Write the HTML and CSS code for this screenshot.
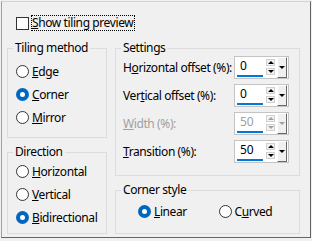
FILE: index.html
```html
<!DOCTYPE html>
<html lang="en">
<head>
  <meta charset="UTF-8">
  <title>Tiling</title>
  <link rel="stylesheet" href="styles.css">
</head>
<body>
<div class="panel">
  <div class="check-row">
    <span class="checkbox"></span>
    <span class="focus"><u>S</u>how tiling preview</span>
  </div>
  <div class="columns">
    <div class="col-left">
      <fieldset class="group tiling">
        <legend>Tiling method</legend>
        <div class="radio"><span class="dot"></span><span><u>E</u>dge</span></div>
        <div class="radio"><span class="dot on"></span><span><u>C</u>orner</span></div>
        <div class="radio"><span class="dot"></span><span><u>M</u>irror</span></div>
      </fieldset>
      <fieldset class="group direction">
        <legend>Direction</legend>
        <div class="radio"><span class="dot"></span><span><u>H</u>orizontal</span></div>
        <div class="radio"><span class="dot"></span><span><u>V</u>ertical</span></div>
        <div class="radio"><span class="dot on"></span><span><u>B</u>idirectional</span></div>
      </fieldset>
    </div>
    <div class="col-right">
      <fieldset class="group settings">
        <legend>Settings</legend>
        <div class="row">
          <span>H<u>o</u>rizontal offset (%):</span>
          <div class="spin"><span class="edit">0</span><span class="arrows"><i class="up"></i><i class="down"></i></span><span class="drop"><i class="down"></i></span></div>
        </div>
        <div class="row">
          <span>Ver<u>t</u>ical offset (%):</span>
          <div class="spin"><span class="edit">0</span><span class="arrows"><i class="up"></i><i class="down"></i></span><span class="drop"><i class="down"></i></span></div>
        </div>
        <div class="row disabled">
          <span><u>W</u>idth (%):</span>
          <div class="spin"><span class="edit">50</span><span class="arrows"><i class="up"></i><i class="down"></i></span><span class="drop"><i class="down"></i></span></div>
        </div>
        <div class="row">
          <span><u>T</u>ransition (%):</span>
          <div class="spin"><span class="edit">50</span><span class="arrows"><i class="up"></i><i class="down"></i></span><span class="drop"><i class="down"></i></span></div>
        </div>
      </fieldset>
      <fieldset class="group corner">
        <legend>Corner style</legend>
        <div class="choices">
          <div class="radio"><span class="dot on"></span><span><u>L</u>inear</span></div>
          <div class="radio"><span class="dot"></span><span>C<u>u</u>rved</span></div>
        </div>
      </fieldset>
    </div>
  </div>
</div>
</body>
</html>
```

FILE: styles.css
```css
body {
    margin: 0;
    background: #f0f0f0;
    font-family: "Noto Sans", "Open Sans", sans-serif;
    font-size: 12px;
    letter-spacing: -0.4px;
    color: #000;
    white-space: nowrap;
}

u {
    text-underline-offset: 1px;
}

.panel {
    box-sizing: border-box;
    width: 310px;
    height: 237px;
    margin: 1px;
    padding: 0 10px 0 5px;
    border-top: 1px solid #d4d4d4;
    border-left: 1px solid #a0a0a0;
    border-right: 1px solid #646464;
    border-bottom: 1px solid #646464;
}

.check-row {
    display: flex;
    align-items: center;
    height: 16px;
    margin: 13px 0 10px 9px;
}

.checkbox {
    box-sizing: border-box;
    width: 13px;
    height: 13px;
    border: 1px solid #333;
    background: #fff;
    margin-right: 2px;
}

.focus {
    height: 16px;
    line-height: 14px;
    border: 1px dotted #000;
    box-sizing: border-box;
    padding: 0 1px 0 0;
}

.columns {
    display: flex;
    gap: 8px;
}

.col-left {
    width: 100px;
}

.col-right {
    width: 185px;
}

.group {
    margin: 0;
    border: 1px solid #dcdcdc;
    padding: 0;
    min-width: 0;
}

.group legend {
    line-height: 14px;
    padding: 0 2px;
    margin-left: 5px;
}

.tiling {
    padding: 5px 0 8px 0;
}

.direction {
    margin-top: 7px;
    padding: 1px 0 4px 0;
}

.radio {
    display: flex;
    align-items: center;
    height: 23px;
    gap: 3px;
}

.tiling .radio,
.direction .radio {
    margin-left: 8px;
}

.dot {
    box-sizing: border-box;
    width: 13px;
    height: 13px;
    border-radius: 50%;
    border: 1px solid #333;
    background: #fff;
    flex: none;
}

.dot.on {
    border: 4px solid #0067c0;
    background: #fff;
}

.settings {
    padding: 0 10px 12px 0;
}

.row {
    display: flex;
    align-items: center;
    justify-content: space-between;
    height: 24px;
    margin: 0 0 4px 7px;
}

.row:last-child {
    margin-bottom: 0;
}

.spin {
    box-sizing: border-box;
    display: flex;
    align-items: stretch;
    width: 55px;
    height: 23px;
    border: 1px solid #c4c4c4;
    background: #fff;
    padding: 0 1px 0 1px;
    letter-spacing: 0;
}

.edit {
    width: 27px;
    padding-left: 3px;
    box-sizing: border-box;
    display: flex;
    align-items: center;
    border-bottom: 2px solid #0078d7;
    margin: 0 0 1px 1px;
}

.arrows {
    display: flex;
    flex-direction: column;
    justify-content: center;
    gap: 2px;
    width: 9px;
    margin-left: 3px;
}

.arrows i {
    display: flex;
    justify-content: center;
    align-items: center;
    height: 5px;
    border: 1px solid #d0d0d0;
    background: #f4f4f4;
}

.arrows i::before {
    content: "";
    border-left: 3px solid transparent;
    border-right: 3px solid transparent;
}

.arrows .up::before {
    border-bottom: 3px solid #000;
}

.arrows .down::before {
    border-top: 3px solid #000;
}

.drop {
    display: flex;
    justify-content: center;
    align-items: center;
    width: 10px;
    margin-left: 2px;
    box-sizing: border-box;
    background: #f0f0f0;
    border-left: 1px solid #fff;
    border-top: 1px solid #fff;
    border-right: 1px solid #696969;
    border-bottom: 1px solid #696969;
}

.drop i::before {
    content: "";
    display: block;
    border-left: 3px solid transparent;
    border-right: 3px solid transparent;
    border-top: 3px solid #000;
}

.disabled {
    color: #a0a0a0;
}

.disabled .arrows .up::before {
    border-bottom-color: #a0a0a0;
}

.disabled .arrows .down::before,
.disabled .drop i::before {
    border-top-color: #a0a0a0;
}

.corner {
    margin-top: 7px;
    padding: 3px 0 10px 0;
}

.choices {
    display: flex;
    margin-left: 22px;
}

.choices .radio {
    width: 81px;
}
```
